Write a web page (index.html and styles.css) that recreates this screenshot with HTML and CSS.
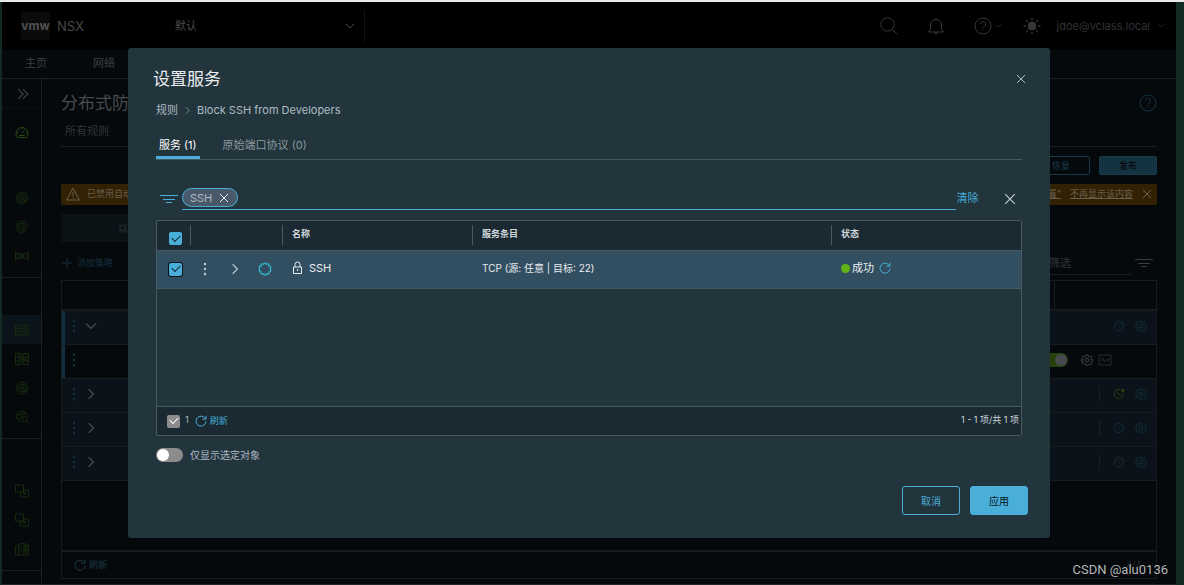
FILE: index.html
```html
<!DOCTYPE html>
<html lang="zh-CN">
<head>
<meta charset="utf-8">
<title>NSX</title>
<link rel="stylesheet" href="styles.css">
</head>
<body>
<svg class="defs" aria-hidden="true">
  <symbol id="search" viewBox="0 0 18 18"><circle cx="7.5" cy="7.5" r="6.7"/><path d="M12.3 12.3l5 5"/></symbol>
  <symbol id="bell" viewBox="0 0 18 18"><path d="M9 1v1.500M3.500 12V8a5.500 5.500 0 0 1 11 0v4l2 3h-15zM7.500 15.200a1.500 1.500 0 0 0 3 0"/></symbol>
  <symbol id="help" viewBox="0 0 18 18"><circle cx="9" cy="9" r="8"/><path d="M6.500 7a2.500 2.500 0 1 1 3.700 2.200C9.300 9.700 9 10 9 11.200M9 12.600v1.200"/></symbol>
  <symbol id="sun" viewBox="0 0 18 18"><circle cx="9" cy="9" r="4" fill="currentColor"/><path stroke-width="1.400" d="M9 .5v2.500M9 15v2.500M.5 9H3M15 9h2.500M3 3l1.800 1.800M13.200 13.200L15 15M15 3l-1.800 1.800M4.800 13.200L3 15"/></symbol>
  <symbol id="down" viewBox="0 0 10 10"><path d="M1 3l4 4 4-4"/></symbol>
  <symbol id="right" viewBox="0 0 10 10"><path d="M3 1l4 4-4 4"/></symbol>
  <symbol id="double" viewBox="0 0 10 10"><path d="M1 1l4 4-4 4M5 1l4 4-4 4"/></symbol>
  <symbol id="close" viewBox="0 0 10 10"><path d="M1 1l8 8M9 1L1 9"/></symbol>
  <symbol id="plus" viewBox="0 0 10 10"><path d="M5 0v10M0 5h10"/></symbol>
  <symbol id="dots" viewBox="0 0 4 14"><g fill="currentColor" stroke="none"><circle cx="2" cy="2" r="1.200"/><circle cx="2" cy="7" r="1.200"/><circle cx="2" cy="12" r="1.200"/></g></symbol>
  <symbol id="filter" viewBox="0 0 18 10"><path d="M0 1.500h18M3 5.500h12M6 8.500h6"/></symbol>
  <symbol id="refresh" viewBox="0 0 12 12"><path d="M10.300 3.600A5 5 0 1 0 11 6.500M11 .8v3.400H7.600"/></symbol>
  <symbol id="warn" viewBox="0 0 14 14"><path d="M7 1.200L13.300 13H.7zM7 5v4.200M7 10.300v1.200"/></symbol>
  <symbol id="gear" viewBox="0 0 14 14"><path d="M6 1h2l.5 1.700 1 .4 1.600-.9 1.500 1.500-.9 1.600.4 1 1.700.5v1.600l-1.700.5-.4 1 .9 1.600-1.500 1.500-1.600-.9-1 .4L8 13.200H6l-.5-1.700-1-.4-1.600.9-1.500-1.500.9-1.600-.4-1L.3 8.400V6.800L2 6.300l.4-1-.9-1.600L3 2.200l1.500.9 1-.4z"/><circle cx="7" cy="7.200" r="2.200"/></symbol>
  <symbol id="clock" viewBox="0 0 14 14"><circle cx="7" cy="7" r="5.500"/><path d="M4.500 3.500L7 7.200l2 2.300M9 3.200l2 2.500"/></symbol>
  <symbol id="clock-on" viewBox="0 0 14 14"><path d="M8.500 2A5.300 5.300 0 1 0 12 6.500M5 4.500l2 2.700 2 1.500"/><circle cx="11.500" cy="3" r="1.500" fill="currentColor"/></symbol>
  <symbol id="chart" viewBox="0 0 14 14"><path d="M1 2h12v10H1zM2.500 8l2-3 2 4 2-3 1.500 2.500L12 5"/></symbol>
  <symbol id="cog-ring" viewBox="0 0 14 14"><path stroke-width="1.300" d="M5.600 2.200Q7-.4 8.400 2.200 11.500 1 11 4 13.600 4.200 12.300 6.900 13.600 9.500 11 10 11.500 13 8.400 11.900 7 14.400 5.600 11.900 2.500 13 3 10 .4 9.500 1.700 6.900.4 4.200 3 4 2.500 1 5.600 2.200z"/></symbol>
  <symbol id="lock" viewBox="0 0 10 14"><path d="M1 6h8v6.500H1zM2.500 6V3.500a2.500 2.500 0 0 1 5 0V6M5 8v2"/></symbol>
  <symbol id="gauge" viewBox="0 0 14 14"><path d="M2.500 12.500A6 6 0 1 1 11.500 12.500zM6.500 8.500l3-3M4 10.500h6M3.500 5.500l1 1M7 3v1.200M1.500 8H3M11 8h1.500"/></symbol>
  <symbol id="target" viewBox="0 0 14 14"><circle cx="7" cy="7" r="6"/><circle cx="7" cy="7" r="4"/><circle cx="7" cy="7" r="2"/><path d="M7 7l4 4"/></symbol>
  <symbol id="radar" viewBox="0 0 14 14"><path d="M7 13A6 6 0 1 1 13 6.500M6.500 11A4 4 0 1 1 11 6.500M6.500 9A2 2 0 1 1 9 6.500M8 13V9l5 4M12 9l-5-2"/></symbol>
  <symbol id="topology" viewBox="0 0 14 14"><path d="M.5 2v10M.5 4.500h5v5h-5M.5 7h5M13.500 2v10M13.500 4.500h-5v5h5M13.500 7h-5M5.500 4.500l3 2.500M5.500 9.500l3-2.500"/></symbol>
  <symbol id="wall" viewBox="0 0 14 14"><path d="M.5 2h13v10H.5zM.5 5.300h13M.5 8.700h13M5 2v3.300M9 2v3.300M3 5.300v3.400M7 5.300v3.400M11 5.300v3.400M5 8.700V12M9 8.700V12"/></symbol>
  <symbol id="wall-split" viewBox="0 0 14 14"><path d="M.5 1.500h5.500v11H.5zM8 1.500h5.500v11H8zM.5 5H6M.5 9H6M8 5h5.500M8 9h5.500M3.500 1.500V5M3.500 9v3.500M11 5v4M3.500 7h7"/></symbol>
  <symbol id="globe" viewBox="0 0 14 14"><path d="M7 12A5.500 5.500 0 1 1 12.300 5.500M2 4.500h4l1 2-2 2H3M7 1v3h4"/><circle cx="9.500" cy="9" r="2.500"/><path d="M11.300 10.800l2.200 2.200"/></symbol>
  <symbol id="copy" viewBox="0 0 14 14"><path d="M.5 1h8v7h-8zM5.500 8v5h8V6h-5M7 7l3 3M10 7.500V10H7.500"/></symbol>
  <symbol id="building" viewBox="0 0 14 14"><path d="M.5 13V4h3v9M3.500 13V2.500L9 1v12M.5 13h13V3H9M6 4v7M9 5h4M9 8h4M11 1v11"/></symbol>
</svg>

<div class="app">
  <header class="topbar">
    <span class="logo">vmw</span>
    <span class="product">NSX</span>
    <button class="tenant"><span>默认</span><svg class="i10"><use href="#down"/></svg></button>
    <div class="tools">
      <button aria-label="搜索"><svg class="i18"><use href="#search"/></svg></button>
      <button aria-label="通知"><svg class="i18"><use href="#bell"/></svg></button>
      <button class="pair" aria-label="帮助"><svg class="i18"><use href="#help"/></svg><svg class="i6"><use href="#down"/></svg></button>
      <button aria-label="主题"><svg class="i18"><use href="#sun"/></svg></button>
      <button class="user"><span>jdoe@vclass.local</span><svg class="i6"><use href="#down"/></svg></button>
    </div>
  </header>
  <nav class="mainnav"><a href="#">主页</a><a href="#">网络</a></nav>

  <div class="work">
    <aside class="rail">
      <button class="expand" aria-label="展开"><svg class="i12"><use href="#double"/></svg></button>
      <div class="overview"><a href="#" aria-label="概览"><svg class="i14"><use href="#gauge"/></svg></a></div>
      <div class="group">
        <a href="#"><svg class="i14"><use href="#target"/></svg></a>
        <a href="#"><svg class="i14"><use href="#radar"/></svg></a>
        <a href="#"><svg class="i14"><use href="#topology"/></svg></a>
      </div>
      <div class="group">
        <a href="#" class="active"><svg class="i14"><use href="#wall"/></svg></a>
        <a href="#"><svg class="i14"><use href="#wall-split"/></svg></a>
        <a href="#"><svg class="i14"><use href="#target"/></svg></a>
        <a href="#"><svg class="i14"><use href="#globe"/></svg></a>
      </div>
      <div class="group">
        <a href="#"><svg class="i14"><use href="#copy"/></svg></a>
        <a href="#"><svg class="i14"><use href="#copy"/></svg></a>
        <a href="#"><svg class="i14"><use href="#building"/></svg></a>
      </div>
    </aside>

    <main class="content">
      <div class="heading"><h1>分布式防火墙</h1><svg class="i18 teal"><use href="#help"/></svg></div>
      <div class="subtabs"><a href="#">所有规则</a></div>
      <div class="actions"><button class="dim-outline">恢复</button><button class="dim-solid">发布</button></div>
      <div class="alert">
        <svg class="i14"><use href="#warn"/></svg><span class="msg">已禁用自动</span>
        <a href="#">设置”</a><a href="#">不再显示该内容</a>
        <button aria-label="关闭"><svg class="i10"><use href="#close"/></svg></button>
      </div>
      <div class="category">以太网</div>
      <div class="policybar">
        <button class="add"><svg class="i10"><use href="#plus"/></svg>添加策略</button>
        <input type="text" placeholder="筛选" aria-label="筛选">
        <svg class="filter"><use href="#filter"/></svg>
      </div>
      <div class="policies">
        <table>
          <colgroup><col><col class="c-end"></colgroup>
          <thead><tr><th></th><th></th></tr></thead>
          <tbody>
            <tr class="policy open"><td><div class="lead"><svg class="dots"><use href="#dots"/></svg><svg class="i12"><use href="#down"/></svg></div></td><td><div class="ends"><svg class="i12"><use href="#clock"/></svg><svg class="i12"><use href="#gear"/></svg></div></td></tr>
            <tr class="rule open"><td colspan="2"><div class="lead"><svg class="dots"><use href="#dots"/></svg><div class="ruleend"><input type="checkbox" class="switch on" aria-label="启用规则" checked><svg class="i12 gear"><use href="#gear"/></svg><svg class="i14 chart"><use href="#chart"/></svg></div></div></td></tr>
            <tr class="policy"><td><div class="lead"><svg class="dots"><use href="#dots"/></svg><svg class="i12"><use href="#right"/></svg></div></td><td><div class="ends"><i class="bar"></i><svg class="i12 green"><use href="#clock-on"/></svg><svg class="i12"><use href="#gear"/></svg></div></td></tr>
            <tr class="policy"><td><div class="lead"><svg class="dots"><use href="#dots"/></svg><svg class="i12"><use href="#right"/></svg></div></td><td><div class="ends"><i class="bar"></i><svg class="i12"><use href="#clock"/></svg><svg class="i12"><use href="#gear"/></svg></div></td></tr>
            <tr class="policy"><td><div class="lead"><svg class="dots"><use href="#dots"/></svg><svg class="i12"><use href="#right"/></svg></div></td><td><div class="ends"><i class="bar"></i><svg class="i12 gray"><use href="#clock"/></svg><svg class="i12"><use href="#gear"/></svg></div></td></tr>
          </tbody>
        </table>
        <div class="policyfoot"><button><svg class="i12"><use href="#refresh"/></svg>刷新</button><span>4/4</span></div>
      </div>
    </main>
  </div>
</div>

<div class="overlay">
  <section class="dialog" role="dialog" aria-labelledby="dlg-title">
    <div class="dlg-head"><h2 id="dlg-title">设置服务</h2><button aria-label="关闭"><svg class="i10"><use href="#close"/></svg></button></div>
    <div class="inner">
      <div class="crumbs"><span>规则</span><svg class="i8"><use href="#right"/></svg><span>Block SSH from Developers</span></div>
      <div class="tabs" role="tablist"><button role="tab" class="active">服务 (1)</button><button role="tab">原始端口协议 (0)</button></div>
      <div class="filterbar">
        <svg class="filter"><use href="#filter"/></svg>
        <div class="field"><span class="chip">SSH<button aria-label="移除"><svg class="i10"><use href="#close"/></svg></button></span></div>
        <button class="clear">清除</button>
        <button class="dismiss" aria-label="关闭筛选"><svg class="i12"><use href="#close"/></svg></button>
      </div>
      <div class="grid">
        <table>
          <colgroup><col class="c-check"><col class="c-act"><col class="c-name"><col class="c-entry"><col></colgroup>
          <thead><tr><th class="pick"><input type="checkbox" class="tick" aria-label="全选" checked></th><th></th><th>名称</th><th>服务条目</th><th>状态</th></tr></thead>
          <tbody><tr>
            <td class="pick"><input type="checkbox" class="tick ringed" aria-label="选择 SSH" checked></td>
            <td><div class="acts"><svg class="dots"><use href="#dots"/></svg><svg class="i12"><use href="#right"/></svg><svg class="i14 cyan"><use href="#cog-ring"/></svg></div></td>
            <td><div class="line"><svg class="lock"><use href="#lock"/></svg>SSH</div></td>
            <td class="entry">TCP (源: 任意 | 目标: 22)</td>
            <td><div class="line status"><i></i>成功<svg class="i12"><use href="#refresh"/></svg></div></td>
          </tr></tbody>
        </table>
        <div class="gridfoot"><input type="checkbox" class="tick muted" aria-label="已选择" checked><span class="count">1</span><button><svg class="i12"><use href="#refresh"/></svg>刷新</button><span class="range">1 - 1 项/共 1 项</span></div>
      </div>
      <label class="only"><input type="checkbox" class="switch">仅显示选定对象</label>
    </div>
    <div class="dlg-foot"><button class="outline">取消</button><button class="solid">应用</button></div>
  </section>
</div>
<div class="credit">CSDN @alu0136</div>
</body>
</html>
```
FILE: styles.css
```css
* { box-sizing: border-box; }
body {
  margin: 0;
  min-height: 100vh;
  display: flex;
  background: #132a25;
  border-top: 2px solid #e8e8e8;
  font: 11px/16px Inter, "Noto Sans CJK SC", sans-serif;
  color: #484b4d;
}
button { font: inherit; color: inherit; background: none; border: 0; padding: 0; display: flex; align-items: center; justify-content: center; }
a { color: inherit; text-decoration: none; }
h1, h2 { margin: 0; font-weight: 400; }
input { font: inherit; margin: 0; }
table { width: 100%; border-collapse: collapse; table-layout: fixed; }
th, td { padding: 0; text-align: left; font-weight: 400; }
svg { fill: none; stroke: currentColor; display: block; flex: none; }
.defs { position: absolute; width: 0; height: 0; }
.i6 { width: 7px; height: 7px; }
.i8 { width: 9px; height: 9px; }
.i10 { width: 10px; height: 10px; }
.i12 { width: 12px; height: 12px; }
.i14 { width: 14px; height: 14px; }
.i18 { width: 18px; height: 18px; }
.dots { width: 4px; height: 14px; }
.filter { width: 18px; height: 10px; }

.app { flex: 1; display: flex; flex-direction: column; margin: 0 8px 0 2px; background: #05090c; border-bottom: 1px solid #222629; }
.topbar { height: 48px; display: flex; align-items: center; background: #000; padding: 0 11px 1px 19px; }
.logo { background: #0b0b0b; border-radius: 2px; width: 29px; line-height: 28px; text-align: center; font-size: 12px; font-weight: 700; color: #505050; }
.product { font-size: 13px; margin-left: 7px; color: #484848; width: 118px; }
.tenant { width: 190px; height: 32px; justify-content: space-between; border-right: 1px solid #101315; padding-right: 9px; }
.tools { margin-left: auto; display: flex; align-items: center; color: #363636; gap: 29px; }
.tools .pair { gap: 3px; margin-right: -8px; }
.tools .user { gap: 8px; margin-left: -13px; color: #303234; }
.mainnav { height: 29px; display: flex; align-items: center; gap: 46px; padding: 0 0 2px 23px; border-bottom: 1px solid #1b2022; color: #3b4043; }
.work { flex: 1; display: flex; }

.rail { width: 40px; border-right: 1px solid #1a1f21; color: #172b0c; }
.rail a { height: 29px; display: flex; align-items: center; justify-content: center; }
.expand { width: 100%; height: 30px; padding-left: 2px; color: #3d4143; border-bottom: 1px solid #0c1113; }
.overview { padding: 8px 0; }
.overview a { color: #294c12; }
.group { padding: 37px 0 7px; border-bottom: 1px solid #1a1f21; }
.overview + .group { padding-top: 29px; }
.rail .active { background: #0b141a; }

.content { flex: 1; min-width: 0; padding: 10px 19px 5px; display: flex; flex-direction: column; }
.heading { display: flex; align-items: center; justify-content: space-between; height: 28px; }
.heading h1 { font-size: 17px; line-height: 24px; }
.teal { color: #12323f; }
.subtabs { height: 30px; padding: 6px 4px; border-bottom: 1px solid #1a1f21; color: #323638; }
.actions { display: flex; justify-content: flex-end; gap: 9px; padding: 9px 0; }
.actions button { width: 58px; height: 19px; border: 1px solid #17394a; border-radius: 2px; font-size: 9px; color: #17394a; }
.actions .dim-solid { background: #143341; color: #000; }
.alert { height: 21px; display: flex; align-items: center; gap: 9px; padding: 0 5px 2px; background: #332104; border-radius: 2px; font-size: 9px; color: #67604f; }
.alert a { text-decoration: underline; }
.alert .msg { margin: 0 auto 0 -2px; }
.category { margin-top: 9px; height: 28px; line-height: 28px; padding-left: 57px; font-size: 10px; background: #0a1216; color: #2e3335; width: 120px; }
.policybar { display: flex; align-items: center; height: 38px; padding: 8px 4px 4px 1px; }
.add { gap: 5px; font-size: 9px; color: #17333f; margin-right: auto; }
.policybar input { width: 83px; height: 24px; background: none; border: 0; border-bottom: 1px solid #1a1f21; padding: 0 1px; margin-right: 4px; }
.policybar input::placeholder { color: #323638; }
.policybar .filter { color: #393d3f; }
.policies { flex: 1; border: 1px solid #171c1f; display: flex; flex-direction: column; }
.c-end { width: 102px; }
.policies th { height: 29px; border-bottom: 2px solid #151a1d; }
.policies th + th { border-left: 1px solid #171c1f; }
.policies td { height: 34px; padding-bottom: 2px; border-bottom: 1px solid #171c1f; }
.policy { background: #0b1219; }
.open td:first-child { box-shadow: inset 3px 0 #12303f; }
.lead { display: flex; align-items: center; padding-left: 10px; gap: 9px; color: #17333f; }
.lead .i12 { color: #4b4f51; }
.ends { display: flex; align-items: center; justify-content: flex-end; gap: 10px; padding-right: 9px; color: #12303f; }
.bar { width: 1px; height: 16px; background: #1a2124; margin-right: 3px; }
.green { color: #27470a; }
.gray { color: #252b2e; }
.ruleend { display: flex; align-items: center; gap: 5px; margin-left: auto; padding-right: 44px; color: #1c4653; }
.ruleend .gear { margin-left: 8px; }
.ruleend .chart { color: #252b2e; }
.policyfoot { margin-top: auto; height: 28px; border-top: 2px solid #171c1f; display: flex; align-items: center; justify-content: space-between; padding: 0 15px 0 12px; color: #1b3947; font-size: 9px; }
.policyfoot button { gap: 3px; }
.policyfoot span { color: #24282a; }

.overlay { position: absolute; inset: 0; display: flex; padding: 48px 134px 47px 128px; }
.dialog { flex: 1; min-width: 0; display: flex; flex-direction: column; background: #22343c; border-radius: 3px; color: #adbbc4; padding: 18px 22px 23px 25px; }
.dlg-head { display: flex; justify-content: space-between; align-items: center; height: 26px; padding-right: 2px; }
.dlg-head h2 { font-size: 17px; line-height: 26px; color: #e9ecef; }
.inner { padding: 0 6px 0 3px; }
.crumbs { display: flex; align-items: center; gap: 5px; padding-top: 10px; }
.crumbs svg { color: #7f8d95; }
.tabs { display: flex; gap: 20px; margin-top: 18px; border-bottom: 1px solid #495865; color: #8c999f; }
.tabs button { padding: 0 3px 3px; border-bottom: 3px solid transparent; height: 23px; }
.tabs .active { color: #fff; border-color: #49afd9; }
.filterbar { display: flex; align-items: center; margin-top: 28px; padding-left: 4px; color: #49afd9; }
.filterbar .filter { margin-right: 4px; }
.field { flex: 1; height: 22px; border-bottom: 1px solid #49afd9; }
.chip { display: inline-flex; align-items: center; gap: 7px; height: 19px; padding: 0 8px 0 7px; border: 1px solid #49afd9; border-radius: 10px; background: #485969; color: #adbbc4; }
.chip button { color: #e9ecef; }
.filterbar .clear { width: 23px; white-space: nowrap; padding-bottom: 2px; }
.dismiss { margin: 0 6px 0 25px; color: #c1cdd4; }
.grid { margin-top: 10px; border: 1px solid #495865; border-radius: 2px; min-height: 216px; display: flex; flex-direction: column; }
.c-check { width: 33px; }
.c-act { width: 92px; }
.c-name { width: 190px; }
.c-entry { width: 359px; }
.grid thead { background: #1b2a32; }
.grid th { height: 29px; padding: 0 10px 2px; font-size: 9px; font-weight: 700; color: #cfd8dd; background: linear-gradient(#495865, #495865) 0 4px / 1px 20px no-repeat; }
.grid tr { border-bottom: 1px solid #495865; }
.grid tbody tr { background: #324f62; color: #e9ecef; }
.grid td { height: 38px; padding: 0 10px 2px; }
.grid th.pick { background: none; padding: 7px 0 0 12px; }
.grid td.pick { padding: 0 0 0 12px; }
.grid .entry { font-size: 10px; }
.acts { display: flex; align-items: center; gap: 22px; padding-left: 3px; padding-top: 2px; color: #c1cdd4; }
.acts .cyan { color: #2fb6c8; margin-left: -5px; }
.line { display: flex; align-items: center; gap: 6px; }
.lock { width: 11px; height: 14px; }
.status { gap: 5px; }
.status i { width: 9px; height: 9px; border-radius: 50%; background: #60b515; margin-right: -3px; }
.status svg { color: #49afd9; }
.tick { appearance: none; width: 13px; height: 13px; border-radius: 2px; background: #49afd9; display: grid; place-items: center; color: #10222c; }
.tick::after { content: ""; width: 7px; height: 4px; margin-top: -3px; border-left: 1px solid; border-bottom: 1px solid; rotate: -45deg; }
.ringed { box-shadow: 0 0 0 1px #0b1418; }
.muted { background: #8c8c8c; color: #fff; }
.gridfoot { margin-top: auto; height: 29px; display: flex; align-items: center; background: #1b2a32; border-top: 1px solid #495865; padding: 0 2px 0 10px; font-size: 9px; }
.count { margin: 0 6px 2px 5px; }
.gridfoot button { gap: 3px; color: #49afd9; }
.range { margin: 0 0 2px auto; color: #cfd8dd; }
.only { display: flex; align-items: center; gap: 7px; margin-top: 11px; font-size: 10px; }
.switch { appearance: none; width: 27px; height: 14px; border-radius: 7px; background: #8c8c8c; display: flex; align-items: center; padding: 0 1px; }
.switch::after { content: ""; width: 12px; height: 12px; border-radius: 50%; background: #fff; }
.switch.on { background: #25420a; justify-content: flex-end; }
.switch.on::after { background: #484b4d; }
.dlg-foot { display: flex; justify-content: flex-end; gap: 10px; margin-top: auto; }
.dlg-foot button { width: 58px; height: 29px; border: 1px solid #49afd9; border-radius: 3px; font-size: 10px; color: #49afd9; }
.dlg-foot .solid { background: #49afd9; color: #08161d; }
.credit { position: absolute; right: 16px; bottom: 6px; font: 13px/18px Roboto, sans-serif; color: #b4b6b7; }
```
